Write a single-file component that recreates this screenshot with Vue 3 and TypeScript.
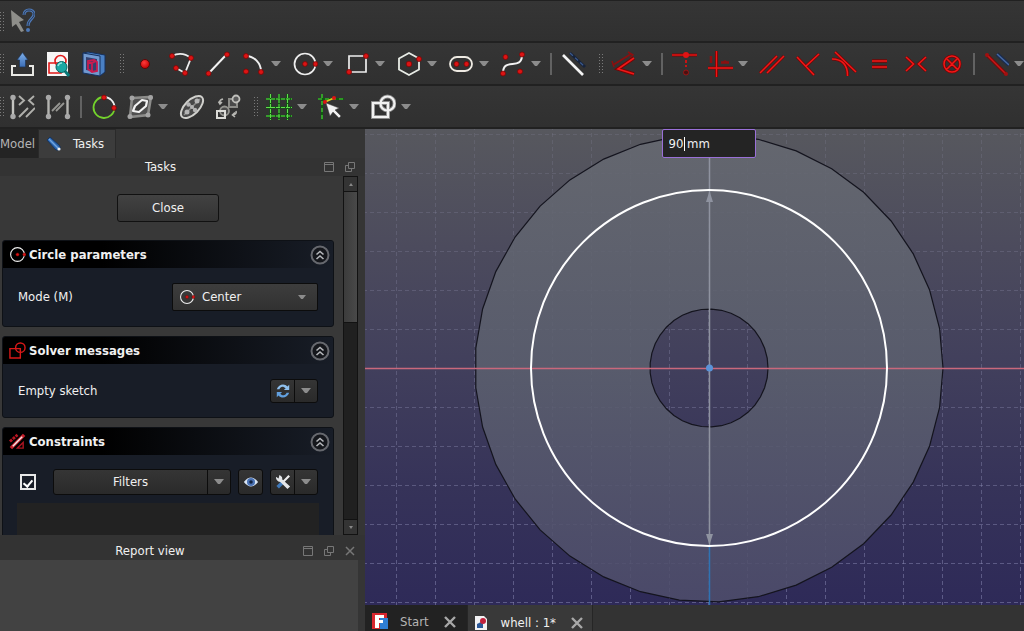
<script setup lang="ts">
import { ref } from 'vue'

type Kind = 'edge' | 'handle' | 'sep' | 'tool' | 'menu'
interface Item {
  kind: Kind
  icon?: string
  label?: string
}

const tool = (icon: string, label: string): Item => ({ kind: 'tool', icon, label })
const menu = (label: string): Item => ({ kind: 'menu', label })
const edge: Item = { kind: 'edge' }
const handle: Item = { kind: 'handle' }
const sep: Item = { kind: 'sep' }

const bars: { name: string; items: Item[] }[] = [
  { name: 'help', items: [edge, tool('whats', "What's this?")] },
  {
    name: 'sketch',
    items: [
      edge, tool('leave', 'Leave sketch'), tool('view', 'View sketch'), tool('section', 'View section'),
      handle, tool('point', 'Point'), tool('polyline', 'Polyline'), tool('line', 'Line'),
      tool('arc', 'Arc'), menu('Arc options'), tool('circle', 'Circle'), menu('Circle options'),
      tool('rect', 'Rectangle'), menu('Rectangle options'), tool('hexagon', 'Polygon'), menu('Polygon options'),
      tool('slot', 'Slot'), menu('Slot options'), tool('spline', 'B-spline'), menu('B-spline options'),
      sep, tool('construction', 'Toggle construction geometry'),
      handle, tool('dimension', 'Dimension'), menu('Dimension options'), sep,
      tool('coincident', 'Coincident'), tool('horver', 'Horizontal or vertical'), menu('Horizontal or vertical options'),
      tool('parallel', 'Parallel'), tool('perp', 'Perpendicular'), tool('tangent', 'Tangent'),
      tool('equal', 'Equal'), tool('symmetric', 'Symmetric'), tool('block', 'Block'),
      sep, tool('driving', 'Toggle driving constraint'), menu('Toggle constraint options'),
    ],
  },
  {
    name: 'visual',
    items: [
      edge, tool('selcon', 'Select constraints'), tool('selgeo', 'Select geometry'), sep,
      tool('dof', 'Convert arc'), tool('internal', 'Internal geometry'), menu('Internal geometry options'),
      tool('ellipse', 'Show ellipse'), tool('copy', 'Copy geometry'),
      handle, tool('grid', 'Grid'), menu('Grid options'), tool('snap', 'Snap'), menu('Snap options'),
      tool('order', 'Rendering order'), menu('Rendering order options'),
    ],
  },
]

const CX = 344
const CY = 239
const STEP = 39
const verticals = Array.from({ length: 41 }, (_, i) => CX + (i - 20) * STEP)
const horizontals = Array.from({ length: 31 }, (_, i) => CY + (i - 15) * STEP)

function facets(radius: number, count = 37): string {
  const points: string[] = []
  for (let i = 0; i < count; i++) {
    const a = (i * 2 * Math.PI) / count
    points.push(`${(CX + radius * Math.cos(a)).toFixed(1)} ${(CY - radius * Math.sin(a)).toFixed(1)}`)
  }
  return `M${points.join('L')}Z`
}
const rim = facets(234)
const bore = facets(59)

const mode = ref('Center')
const diameter = ref('90 mm')
const showConstraints = ref(true)
</script>

<template>
  <div class="app">
    <svg class="sprite" aria-hidden="true">
      <defs>
        <radialGradient id="redball" cx=".4" cy=".35" r=".7">
          <stop offset="0" stop-color="#ff3a3a" />
          <stop offset="1" stop-color="#c00000" />
        </radialGradient>
        <linearGradient id="bluearrow" x1="0" y1="0" x2="0" y2="1">
          <stop offset="0" stop-color="#7fb0ea" />
          <stop offset="1" stop-color="#3b6db5" />
        </linearGradient>
      </defs>
      <symbol id="i-whats" viewBox="0 0 26 26">
        <path d="M2 2L15 12L10 14L15 23L12 24L7 16L3 19Z" fill="#8e8e8a" />
        <path d="M15 7C15 0 25 1 25 6C25 11 19 11 19 18" fill="none" stroke="#4e79b8" stroke-width="3" />
        <path d="M15 7C15 0 25 1 25 6C25 11 19 11 19 18" fill="none" stroke="#27364c" stroke-width="1" />
        <circle cx="19" cy="22" r="2" fill="#4e79b8" />
      </symbol>
      <symbol id="i-leave" viewBox="0 0 26 26">
        <path d="M7 15H3V24H24V15H20" fill="none" stroke="#e8e8e4" stroke-width="2" />
        <path d="M13.500 1.500L19 9H16.500V16H10.500V9H8Z" fill="url(#bluearrow)" stroke="#1e3558" stroke-width=".7" />
      </symbol>
      <symbol id="i-view" viewBox="0 0 26 26">
        <path d="M2 1H23V25H2Z" fill="#f6f6f6" />
        <path d="M4 12H16V22H4Z" fill="none" stroke="#e01818" stroke-width="1.600" />
        <circle cx="15.500" cy="10" r="5.500" fill="none" stroke="#e01818" stroke-width="1.600" />
        <path d="M20 20L24 25" stroke="#087a7a" stroke-width="3" />
        <circle cx="16.500" cy="16" r="5.500" fill="#1ba8a4" stroke="#0a6462" />
        <path d="M13 15A4 4 0 0 1 17 12" fill="none" stroke="#93e4e0" stroke-width="1.500" />
      </symbol>
      <symbol id="i-section" viewBox="0 0 26 26">
        <path d="M2 2L7 1L24 4V21L19 25L2 22Z" fill="#4a80c4" stroke="#16305c" />
        <path d="M2 2L19 5V25L2 22Z" fill="#7199cf" stroke="#16305c" />
        <path d="M5 6L16 8V21L5 19Z" fill="#33406e" />
        <path d="M7 18V10L13 9L16 11V20L11 21ZM11 12V20M7 12L11 12L15 10" fill="none" stroke="#c81c50" stroke-width="1.800" />
      </symbol>
      <symbol id="i-point" viewBox="0 0 26 26"><circle cx="13" cy="13" r="4.500" fill="url(#redball)" stroke="#5a0808" /></symbol>
      <symbol id="i-polyline" viewBox="0 0 26 26">
        <path d="M4 5Q14 0 23 7L17 22L8 17" fill="none" stroke="#eee" stroke-width="1.800" />
        <g fill="#dc1414" stroke="#7a0606" stroke-width=".8"><circle cx="4" cy="5" r="2.500" /><circle cx="23" cy="7" r="2.500" /><circle cx="8" cy="17" r="2.500" /><circle cx="17" cy="22" r="2.500" /></g>
      </symbol>
      <symbol id="i-line" viewBox="0 0 26 26">
        <path d="M4 23L23 3" stroke="#f2f2f2" stroke-width="2" />
        <g fill="#dc1414" stroke="#7a0606" stroke-width=".8"><circle cx="4.500" cy="22.500" r="2.500" /><circle cx="23" cy="3.500" r="2.500" /></g>
      </symbol>
      <symbol id="i-arc" viewBox="0 0 26 26">
        <path d="M6 5A15.500 15.500 0 0 1 21 21" fill="none" stroke="#eee" stroke-width="2" />
        <g fill="#dc1414" stroke="#7a0606" stroke-width=".8"><circle cx="6" cy="5" r="2.500" /><circle cx="21" cy="21" r="2.500" /><circle cx="6" cy="20.500" r="2.500" /></g>
      </symbol>
      <symbol id="i-circle" viewBox="0 0 26 26">
        <circle cx="13" cy="13" r="10.500" fill="none" stroke="#eee" stroke-width="1.700" />
        <g fill="#dc1414" stroke="#7a0606" stroke-width=".8"><circle cx="13" cy="13" r="2.400" /><circle cx="23.500" cy="13" r="2.400" /></g>
      </symbol>
      <symbol id="i-rect" viewBox="0 0 26 26">
        <path d="M5 5H22V21H5Z" fill="none" stroke="#eee" stroke-width="1.700" />
        <g fill="#dc1414" stroke="#7a0606" stroke-width=".8"><circle cx="5" cy="21" r="2.500" /><circle cx="22" cy="5" r="2.500" /></g>
      </symbol>
      <symbol id="i-hexagon" viewBox="0 0 26 26">
        <path d="M13 2L23 7.500V18.500L13 24L3 18.500V7.500Z" fill="none" stroke="#e8ece6" stroke-width="1.800" />
        <g fill="#dc1414" stroke="#7a0606" stroke-width=".8"><circle cx="13" cy="13" r="2.800" /><circle cx="23" cy="8" r="2.500" /></g>
      </symbol>
      <symbol id="i-slot" viewBox="0 0 26 26">
        <rect x="2" y="6" width="22" height="14" rx="7" fill="none" stroke="#eeeae2" stroke-width="1.800" />
        <g fill="#dc1414" stroke="#7a0606" stroke-width=".8"><circle cx="8.500" cy="13" r="2.500" /><circle cx="18.500" cy="13" r="2.500" /></g>
      </symbol>
      <symbol id="i-spline" viewBox="0 0 26 26">
        <path d="M3 22C3 6 22 20 22 4" fill="none" stroke="#f2f2f2" stroke-width="2" />
        <g fill="#dc1414" stroke="#7a0606" stroke-width=".8"><circle cx="3" cy="22.500" r="2.500" /><circle cx="22" cy="3.500" r="2.500" /><circle cx="5.500" cy="6" r="2.500" /><circle cx="20" cy="20.500" r="2.500" /></g>
      </symbol>
      <symbol id="i-construction" viewBox="0 0 26 26">
        <path d="M3 4L23 24" stroke="#f4f4f4" stroke-width="2.600" />
        <path d="M10 2L25 16" stroke="#16233c" stroke-width="3" />
        <path d="M10 2L25 16" stroke="#3c5a8c" stroke-width="1.200" stroke-dasharray="4 3" />
      </symbol>
      <symbol id="i-dimension" viewBox="0 0 26 26">
        <path d="M2 14L20 3" stroke="#8a1010" stroke-width="2" />
        <path d="M1 10L3 16M17 1L22 4L19 7" fill="none" stroke="#8a1010" stroke-width="1.500" />
        <path d="M23 7L7 18L23 23" fill="none" stroke="#780404" stroke-width="3.600" />
        <path d="M23 7L7 18L23 23" fill="none" stroke="#f01818" stroke-width="1.600" />
      </symbol>
      <symbol id="i-coincident" viewBox="0 0 26 26">
        <path d="M1 4H26" stroke="#780404" stroke-width="3" /><path d="M1 4H26" stroke="#ee1616" stroke-width="1.300" />
        <circle cx="15" cy="4" r="3" fill="#e01414" />
        <path d="M15 9V12M15 14V16" stroke="#c81414" stroke-width="2" />
        <circle cx="15" cy="21.500" r="2.500" fill="#4a1010" stroke="#9a1414" />
      </symbol>
      <symbol id="i-horver" viewBox="0 0 26 26">
        <path d="M9.500 0V26M1 17H26" stroke="#780404" stroke-width="3" /><path d="M9.500 0V26M1 17H26" stroke="#ee1616" stroke-width="1.300" />
        <path d="M4 5V12M14 11.500H22" stroke="#8a1010" stroke-width="2.500" />
        <path d="M16 11Q18 8 20 11" fill="none" stroke="#8a1010" />
      </symbol>
      <symbol id="i-parallel" viewBox="0 0 26 26">
        <path d="M1 22L18 5M8 22L25 5" stroke="#780404" stroke-width="3" /><path d="M1 22L18 5M8 22L25 5" stroke="#f01818" stroke-width="1.500" />
      </symbol>
      <symbol id="i-perp" viewBox="0 0 26 26">
        <path d="M2 6L19 24M24 3L11 15" stroke="#780404" stroke-width="3" /><path d="M2 6L19 24M24 3L11 15" stroke="#f01818" stroke-width="1.500" />
      </symbol>
      <symbol id="i-tangent" viewBox="0 0 26 26">
        <path d="M4 1L25 21M1 8C11 8 17 14 16.500 25" fill="none" stroke="#780404" stroke-width="3" />
        <path d="M4 1L25 21M1 8C11 8 17 14 16.500 25" fill="none" stroke="#f01818" stroke-width="1.500" />
      </symbol>
      <symbol id="i-equal" viewBox="0 0 26 26">
        <path d="M5 10H20M5 16H20" stroke="#780404" stroke-width="3.400" /><path d="M5 10H20M5 16H20" stroke="#f01818" stroke-width="1.500" />
      </symbol>
      <symbol id="i-symmetric" viewBox="0 0 26 26">
        <path d="M3 6L10.500 13L3 20M23 6L15.500 13L23 20" fill="none" stroke="#780404" stroke-width="3" />
        <path d="M3 6L10.500 13L3 20M23 6L15.500 13L23 20" fill="none" stroke="#f01818" stroke-width="1.500" />
      </symbol>
      <symbol id="i-block" viewBox="0 0 26 26">
        <path d="M7.500 7.500L18.500 18.500M18.500 7.500L7.500 18.500M5 13A8 8 0 1 0 21 13A8 8 0 1 0 5 13" fill="none" stroke="#780404" stroke-width="3" />
        <path d="M7.500 7.500L18.500 18.500M18.500 7.500L7.500 18.500M5 13A8 8 0 1 0 21 13A8 8 0 1 0 5 13" fill="none" stroke="#f01818" stroke-width="1.500" />
      </symbol>
      <symbol id="i-driving" viewBox="0 0 26 26">
        <path d="M4 4L23 23" stroke="#7a0808" stroke-width="3.400" /><path d="M4 4L23 23" stroke="#c81818" stroke-width="1.500" />
        <circle cx="4" cy="4" r="2" fill="#a01010" /><circle cx="23" cy="23" r="2" fill="#a01010" />
        <path d="M14 3L26 14" stroke="#1b2c4c" stroke-width="4" /><path d="M14 3L26 14" stroke="#4668a4" stroke-width="1.500" />
      </symbol>
      <symbol id="i-selcon" viewBox="0 0 26 26">
        <path d="M4 3V23" stroke="#c4c4c0" stroke-width="2.400" />
        <circle cx="4" cy="3.500" r="2.700" fill="#aaa" /><circle cx="4" cy="22.500" r="2.700" fill="#aaa" />
        <path d="M10 2L15 6.500L10 11M25 2L20 6.500L25 11M10 23L19 14M17 23L26 14" fill="none" stroke="#b0b0ac" stroke-width="1.900" />
      </symbol>
      <symbol id="i-selgeo" viewBox="0 0 26 26">
        <path d="M3.500 3V23M22.500 3V23" stroke="#b4b4b0" stroke-width="2.400" />
        <g fill="#a8a8a8"><circle cx="3.500" cy="3.500" r="2.700" /><circle cx="3.500" cy="22.500" r="2.700" /><circle cx="22.500" cy="3.500" r="2.700" /><circle cx="22.500" cy="22.500" r="2.700" /></g>
        <path d="M7 17L15 9M11 17L19 9" stroke="#969692" stroke-width="1.800" />
      </symbol>
      <symbol id="i-dof" viewBox="0 0 26 26">
        <path d="M13 3A10.500 10.500 0 1 0 23.500 14" fill="none" stroke="#73d22c" stroke-width="1.800" />
        <path d="M13 3A10.500 10.500 0 0 1 23.500 14" fill="none" stroke="#eee" stroke-width="1.800" />
        <g fill="#e01414" stroke="#7a0606" stroke-width=".8"><circle cx="13" cy="3.500" r="2.400" /><circle cx="23" cy="14" r="2.400" /></g>
      </symbol>
      <symbol id="i-internal" viewBox="0 0 26 26">
        <path d="M5 4L24 3L21 21L3 23Z" fill="#505050" stroke="#8c8c8a" stroke-width="2.600" />
        <g fill="#a4a4a4"><circle cx="5" cy="4" r="2.500" /><circle cx="23.500" cy="3.500" r="2.500" /><circle cx="21" cy="21" r="2.500" /><circle cx="3" cy="22.500" r="2.500" /></g>
        <path d="M6 17L8 12L15 6L20 7L19 12L12 18Z" fill="#3a3a3a" stroke="#f2f2f2" stroke-width="2.200" stroke-linejoin="round" />
      </symbol>
      <symbol id="i-ellipse" viewBox="0 0 26 26">
        <ellipse cx="13" cy="13" rx="14" ry="7" transform="rotate(-45 13 13)" fill="#484848" stroke="#d0d0cc" stroke-width="2" />
        <path d="M5 21L21 5M9 9L17 17" stroke="#8c8c8a" stroke-width="1.500" />
        <g fill="#b4b4b4"><circle cx="9.500" cy="10.500" r="2.200" /><circle cx="16" cy="16" r="2.200" /><circle cx="18" cy="7" r="2.500" /><circle cx="8" cy="18" r="2.500" /><circle cx="13" cy="13" r="2" /></g>
      </symbol>
      <symbol id="i-copy" viewBox="0 0 26 26">
        <path d="M14 5H22V13H14Z" fill="#4a4a4a" stroke="#8c8c88" stroke-width="2" /><circle cx="21" cy="5" r="3.500" fill="#5a5a5a" stroke="#c0c0bc" stroke-width="1.800" />
        <circle cx="9.500" cy="17" r="4.500" fill="#4a4a4a" stroke="#94948f" stroke-width="1.800" /><path d="M2 17H10V24H2Z" fill="none" stroke="#dcdcd8" stroke-width="2" />
        <path d="M5 10V7Q5 6 8 5M3.500 7.500L5 10L7 8M21 17Q22 20 18 21M20 18.500L17.500 21L20 23" fill="none" stroke="#b8b8b4" stroke-width="1.600" />
      </symbol>
      <symbol id="i-grid" viewBox="0 0 26 26">
        <path d="M4.500 0V26M13 0V26M21.500 0V26M0 5H26M0 13.500H26M0 22H26" stroke="#0e5c0e" stroke-width="2.200" />
        <path d="M4.500 0V26M13 0V26M21.500 0V26M0 5H26M0 13.500H26M0 22H26" stroke="#5ee04a" stroke-width="1" stroke-dasharray="4 1" />
      </symbol>
      <symbol id="i-snap" viewBox="0 0 26 26">
        <path d="M4 0V26M0 5H26" stroke="#0e5c0e" stroke-width="2" /><path d="M4 0V26M0 5H26" stroke="#4ece3c" stroke-width="1.200" stroke-dasharray="4 3" />
        <path d="M7 8L16 4" stroke="#e0d020" stroke-width="1.500" />
        <circle cx="7" cy="8" r="2" fill="#dc1414" /><circle cx="16" cy="4" r="2" fill="#dc1414" />
        <path d="M8 9L21 14L17 16L23 22L21 24L15 18L12 22Z" fill="#f0f0f0" stroke="#444" stroke-width=".5" />
      </symbol>
      <symbol id="i-order" viewBox="0 0 26 26">
        <path d="M3 9H18V23H3Z" fill="none" stroke="#888" stroke-width="4" /><circle cx="17.500" cy="9.500" r="7" fill="none" stroke="#888" stroke-width="4" />
        <path d="M3 9H18V23H3Z" fill="none" stroke="#f2f2f2" stroke-width="2.200" /><circle cx="17.500" cy="9.500" r="7" fill="none" stroke="#f2f2f2" stroke-width="2.200" />
      </symbol>
      <symbol id="i-caret" viewBox="0 0 10 6"><path d="M0 0H10L6 5H4Z" fill="#8c8c8c" /></symbol>
      <symbol id="i-collapse" viewBox="0 0 20 20">
        <circle cx="10" cy="10" r="8.500" fill="#15171c" stroke="#66686e" stroke-width="2" />
        <path d="M6.500 9.500L10 6.500L13.500 9.500M6.500 14L10 11L13.500 14" fill="none" stroke="#b4b6ba" stroke-width="1.600" />
      </symbol>
      <symbol id="i-dock" viewBox="0 0 12 12"><path d="M1.500 1.500H10.500V10.500H1.500ZM2 3.500H10" fill="none" stroke="#777" /></symbol>
      <symbol id="i-float" viewBox="0 0 12 12"><path d="M4.500 1.500H10.500V7.500H4.500ZM4 4.500H1.500V10.500H7.500V8" fill="none" stroke="#777" /></symbol>
      <symbol id="i-x" viewBox="0 0 12 12"><path d="M1 1L11 11M11 1L1 11" stroke="currentColor" stroke-width="2.400" /></symbol>
    </svg>

    <header class="toolbars">
      <div v-for="bar in bars" :key="bar.name" class="bar" :class="'bar-' + bar.name" role="toolbar" :aria-label="bar.name">
        <template v-for="(item, i) in bar.items" :key="i">
          <span v-if="item.kind === 'edge' || item.kind === 'handle'" :class="item.kind"></span>
          <span v-else-if="item.kind === 'sep'" class="sep"></span>
          <button v-else-if="item.kind === 'tool'" class="tool" type="button" :aria-label="item.label">
            <svg class="glyph"><use :href="'#i-' + item.icon" /></svg>
          </button>
          <button v-else class="more" type="button" :aria-label="item.label">
            <svg class="caret"><use href="#i-caret" /></svg>
          </button>
        </template>
      </div>
    </header>

    <div class="body">
      <aside class="side">
        <nav class="tabs">
          <button class="tab" type="button">Model</button>
          <button class="tab current" type="button">
            <svg class="pencil" viewBox="0 0 18 18">
              <path d="M2 5L5 2L15 11L15 15L11 15Z" fill="#2c66ae" stroke="#17345e" />
              <path d="M4 4L13 13" stroke="#70a4e0" stroke-width="1.500" />
              <circle cx="14" cy="14" r="1.600" fill="#eee" />
            </svg>
            Tasks
          </button>
        </nav>
        <div class="dock-title">
          <h2>Tasks</h2>
          <button class="mini" type="button" aria-label="Dock tasks"><svg><use href="#i-dock" /></svg></button>
          <button class="mini" type="button" aria-label="Float tasks"><svg><use href="#i-float" /></svg></button>
        </div>

        <div class="scroller">
          <div class="tasks">
            <button class="close" type="button">Close</button>

            <section class="group">
              <header class="group-head">
                <svg class="head-icon"><use href="#i-circle" /></svg>
                <h3>Circle parameters</h3>
                <button class="fold" type="button" aria-label="Collapse circle parameters"><svg><use href="#i-collapse" /></svg></button>
              </header>
              <div class="group-row mode-row">
                <label for="mode">Mode (M)</label>
                <div class="combo">
                  <svg class="combo-icon"><use href="#i-circle" /></svg>
                  <select id="mode" v-model="mode"><option>Center</option></select>
                  <svg class="combo-caret"><use href="#i-caret" /></svg>
                </div>
              </div>
            </section>

            <section class="group">
              <header class="group-head">
                <svg class="head-icon" viewBox="0 0 18 18"><path d="M1 7H12V17H1Z" fill="none" stroke="#d81818" stroke-width="1.500" /><circle cx="12" cy="6" r="5" fill="none" stroke="#d81818" stroke-width="1.500" /></svg>
                <h3>Solver messages</h3>
                <button class="fold" type="button" aria-label="Collapse solver messages"><svg><use href="#i-collapse" /></svg></button>
              </header>
              <div class="group-row solver-row">
                <span>Empty sketch</span>
                <div class="split">
                  <button type="button" aria-label="Refresh">
                    <svg class="small-icon" viewBox="0 0 18 18">
                      <path d="M2 7C4 1 11 0 14 4L16 2V8H10L12 6C9 3 6 4 5 7Z" fill="#8fc0ee" />
                      <path d="M16 11C14 17 7 18 4 14L2 16V10H8L6 12C9 15 12 14 13 11Z" fill="#62a0de" />
                    </svg>
                  </button>
                  <button type="button" aria-label="Refresh options"><svg class="caret"><use href="#i-caret" /></svg></button>
                </div>
              </div>
            </section>

            <section class="group">
              <header class="group-head">
                <svg class="head-icon" viewBox="0 0 18 18">
                  <path d="M1 9L9 2" stroke="#b81420" stroke-width="3" stroke-dasharray="3 1" />
                  <path d="M2 16L16 2" stroke="#c8202c" stroke-width="3.600" /><path d="M4 14L14 4" stroke="#f4e4e4" stroke-width="1.600" />
                  <path d="M9 16L15 10V16Z" fill="none" stroke="#a81420" stroke-width="1.500" />
                </svg>
                <h3>Constraints</h3>
                <button class="fold" type="button" aria-label="Collapse constraints"><svg><use href="#i-collapse" /></svg></button>
              </header>
              <div class="group-row filter-row">
                <input v-model="showConstraints" class="check" type="checkbox" aria-label="Enable filters" />
                <div class="split filters">
                  <button class="filter-name" type="button">Filters</button>
                  <button type="button" aria-label="Filter options"><svg class="caret"><use href="#i-caret" /></svg></button>
                </div>
                <div class="split">
                  <button type="button" aria-label="Show constraints">
                    <svg class="small-icon" viewBox="0 0 18 18"><path d="M1 9Q9-1 17 9Q9 19 1 9Z" fill="#dbe6f4" /><circle cx="9" cy="9" r="4.500" fill="#4a72b4" /><circle cx="9" cy="9" r="2" fill="#122340" /></svg>
                  </button>
                </div>
                <div class="split">
                  <button type="button" aria-label="Settings">
                    <svg class="small-icon" viewBox="0 0 18 18">
                      <path d="M16 2L9 9" stroke="#eee" stroke-width="2.400" /><path d="M9 9L3 15" stroke="#3f78b8" stroke-width="4" />
                      <path d="M1 3L4 5L5 1Q9 3 8 6L17 14L14 17L6 9Q1 8 1 3Z" fill="#e4e6e8" />
                    </svg>
                  </button>
                  <button type="button" aria-label="Settings options"><svg class="caret"><use href="#i-caret" /></svg></button>
                </div>
              </div>
              <div class="list"></div>
            </section>
          </div>
          <div class="scrollbar" aria-hidden="true">
            <span class="step"><svg viewBox="0 0 4 3"><path d="M0 3L2 0L4 3Z" fill="#888" /></svg></span>
            <span class="track"><span class="thumb"></span></span>
            <span class="step"><svg viewBox="0 0 4 3"><path d="M0 0L2 3L4 0Z" fill="#888" /></svg></span>
          </div>
        </div>

        <div class="dock-title report">
          <h2>Report view</h2>
          <button class="mini" type="button" aria-label="Dock report view"><svg><use href="#i-dock" /></svg></button>
          <button class="mini" type="button" aria-label="Float report view"><svg><use href="#i-float" /></svg></button>
          <button class="mini" type="button" aria-label="Close report view"><svg viewBox="0 0 12 12"><path d="M2 2L10 10M10 2L2 10" stroke="currentColor" stroke-width="1.500" /></svg></button>
        </div>
        <div class="report-body"></div>
      </aside>

      <main class="work">
        <div class="viewport">
          <svg class="scene" viewBox="0 0 659 476" preserveAspectRatio="xMidYMid slice">
            <defs>
              <linearGradient id="face" x1="0" y1="0" x2="0" y2="1">
                <stop offset="0" stop-color="#666971" />
                <stop offset=".5" stop-color="#5b5f6e" />
                <stop offset="1" stop-color="#4e4d6b" />
              </linearGradient>
              <linearGradient id="mesh" gradientUnits="userSpaceOnUse" x1="0" y1="0" x2="0" y2="476">
                <stop offset="0" stop-color="#8c8ca4" stop-opacity=".2" />
                <stop offset="1" stop-color="#8c8cb8" stop-opacity=".5" />
              </linearGradient>
            </defs>
            <g class="mesh">
              <path v-for="x in verticals" :key="'v' + x" :d="`M${x - 0.5} -346V822`" stroke="url(#mesh)" />
              <path v-for="y in horizontals" :key="'h' + y" :d="`M-436 ${y + 0.5}H1124`" stroke="url(#mesh)" />
            </g>
            <path :d="rim + bore" fill="url(#face)" fill-rule="evenodd" fill-opacity=".88" stroke="#14141e" stroke-width="1.200" />
            <path d="M-436 239.500H1124" stroke="#c9687c" stroke-width="1.500" />
            <path d="M344.500 417V822" stroke="#2f73b4" stroke-width="1.500" />
            <path d="M344.500 28V417" stroke="#8f93a0" stroke-width="1.500" />
            <path d="M344.500 62L348 73H341ZM344.500 416L348 405H341Z" fill="#8f93a0" />
            <circle cx="344" cy="239" r="178" fill="none" stroke="#fff" stroke-width="2" />
            <circle cx="344.500" cy="239" r="3.500" fill="#5b93d8" />
          </svg>
          <div class="value">
            <input v-model="diameter" type="text" aria-label="Diameter" />
            <span class="cursor"></span>
          </div>
        </div>
        <nav class="docs">
          <div class="doc">
            <svg class="doc-icon" viewBox="0 0 18 18">
              <rect x="1" y="0" width="15" height="16" fill="#d8262e" />
              <rect x="9" y="5" width="8" height="11" fill="#2f7fd4" />
              <rect x="4" y="2" width="4" height="13" fill="#fff" />
              <rect x="8" y="2" width="5" height="3" fill="#fff" />
              <rect x="8" y="7" width="4" height="3" fill="#fff" />
            </svg>
            <button class="doc-name" type="button">Start</button>
            <button class="doc-close" type="button" aria-label="Close Start"><svg><use href="#i-x" /></svg></button>
          </div>
          <div class="doc open">
            <svg class="doc-icon page" viewBox="0 0 14 16">
              <path d="M1 1H10L13 4V15H1Z" fill="#f2f2f4" />
              <path d="M3 9L7 7L9 9V13H3Z" fill="#2c5898" /><circle cx="9" cy="6" r="3" fill="#c0203c" />
            </svg>
            <button class="doc-name" type="button">whell : 1*</button>
            <button class="doc-close" type="button" aria-label="Close whell"><svg><use href="#i-x" /></svg></button>
          </div>
        </nav>
      </main>
    </div>
  </div>
</template>

<style>
body {
  margin: 0;
  background: #323232;
}
</style>

<style scoped>
.app {
  display: flex;
  flex-direction: column;
  height: 100vh;
  overflow: hidden;
  background: #323232;
  color: #f0f0f0;
  font-family: "DejaVu Sans Condensed", "Noto Sans", sans-serif;
  font-size: 13px;
  line-height: 16px;
}
.app * {
  box-sizing: border-box;
}
.sprite {
  position: absolute;
  width: 0;
  height: 0;
}
button,
input,
select {
  margin: 0;
  padding: 0;
  border: 0;
  background: none;
  color: inherit;
  font: inherit;
}
h2,
h3 {
  margin: 0;
  font-size: 13px;
  line-height: 16px;
}
h2 {
  font-weight: 400;
}
svg {
  display: block;
  flex: none;
}

.toolbars {
  flex: none;
}
.bar {
  display: flex;
  align-items: stretch;
  height: 43px;
  overflow: hidden;
  border-bottom: 2px solid #212121;
  background: linear-gradient(#353535, #303030);
}
.bar-help {
  border-top: 1px solid #212121;
}
.edge,
.handle,
.sep,
.tool,
.more {
  flex: none;
}
.edge,
.handle {
  height: 19px;
  align-self: center;
  background: conic-gradient(from 270deg at 1px 1px, #7a7a7a 90deg, transparent 0) 0 0 / 3px 3px content-box content-box;
}
.edge {
  width: 4px;
}
.handle {
  width: 15px;
  padding: 0 1px 0 8px;
}
.sep {
  width: 8px;
  height: 22px;
  align-self: center;
  padding: 0 3px;
  background: #626262 content-box;
}
.bar-visual .sep {
  width: 10px;
  padding: 0 4px;
}
.tool {
  display: grid;
  place-items: center;
  width: 36px;
}
.glyph {
  width: 26px;
  height: 26px;
}
.more {
  display: flex;
  align-items: center;
  width: 16px;
}
.caret {
  width: 10px;
  height: 6px;
}

.body {
  display: grid;
  grid-template-columns: clamp(300px, 36vw, 365px) minmax(0, 1fr);
  flex: 1;
  min-height: 0;
}
.side {
  display: flex;
  flex-direction: column;
  min-height: 0;
  background: #353535;
}
.tabs {
  display: flex;
  flex: none;
  height: 29px;
}
.tab {
  width: 38px;
  background: #242424;
  color: #b4b4b4;
  text-align: left;
}
.tab.current {
  display: flex;
  align-items: center;
  gap: 10px;
  width: 78px;
  padding: 0 0 0 6px;
  border: 1px solid #2a2a2a;
  border-bottom: 0;
  background: #3c3c3c;
  color: #f0f0f0;
}
.pencil {
  width: 18px;
  height: 18px;
}
.dock-title {
  display: flex;
  flex: none;
  align-items: center;
  gap: 9px;
  height: 18px;
  padding-right: 9px;
  background: #333;
}
.dock-title h2 {
  flex: 1;
  padding-left: 7px;
  text-align: center;
}
.mini,
.mini svg {
  width: 12px;
  height: 12px;
  color: #777;
}
.report {
  height: 25px;
  padding: 7px 9px 0 0;
}
.report-body {
  flex: none;
  height: 71px;
  margin-right: 7px;
  background: #424242;
}

.scroller {
  display: flex;
  flex: 1;
  min-height: 0;
  padding-right: 7px;
}
.tasks {
  display: flex;
  flex: 1;
  flex-direction: column;
  gap: 9px;
  min-width: 0;
  overflow: hidden;
  padding: 18px 9px 0 2px;
  background: #383838;
}
.close {
  flex: none;
  align-self: center;
  width: 102px;
  height: 28px;
  margin-bottom: 9px;
  border: 1px solid #111;
  border-radius: 3px;
  background: linear-gradient(#424242, #333);
}
.group {
  flex: none;
  overflow: hidden;
  border: 1px solid #0e1116;
  border-radius: 3px;
  background: #181d27;
}
.group-head {
  display: flex;
  align-items: center;
  gap: 3px;
  height: 27px;
  padding: 0 3px 0 6px;
  background: linear-gradient(90deg, #000 30%, #181d27);
}
.group-head h3 {
  flex: 1;
  font-weight: 700;
}
.head-icon {
  width: 17px;
  height: 17px;
}
.fold,
.fold svg {
  width: 20px;
  height: 20px;
}
.group-row {
  display: flex;
  align-items: center;
  justify-content: space-between;
  padding: 0 15px;
}
.mode-row {
  height: 58px;
}
.solver-row {
  height: 53px;
}
.combo {
  display: flex;
  align-items: center;
  gap: 7px;
  width: 146px;
  height: 28px;
  padding: 0 11px 0 6px;
  border: 1px solid #0c0c0c;
  border-radius: 2px;
  background: linear-gradient(#3d3d3d, #313131);
}
.combo select {
  flex: 1;
  min-width: 0;
  appearance: none;
}
.combo-icon {
  width: 16px;
  height: 16px;
}
.combo-caret {
  width: 8px;
  height: 5px;
}
.split {
  display: flex;
  height: 24px;
  border: 1px solid #0c0c0c;
  border-radius: 3px;
  background: linear-gradient(#353535, #2a2a2a);
}
.split button {
  display: grid;
  place-items: center;
  width: 23px;
}
.split button + button {
  border-left: 1px solid #0c0c0c;
}
.small-icon {
  width: 16px;
  height: 16px;
}
.filter-row {
  gap: 7px;
  height: 54px;
}
.filter-row .split {
  height: 26px;
}
.split.filters {
  flex: 1;
  margin-left: 10px;
}
.split .filter-name {
  flex: 1;
}
.check {
  display: grid;
  flex: none;
  place-items: center;
  width: 16px;
  height: 16px;
  margin-left: 2px;
  border: 2px solid #e8e8e8;
  appearance: none;
}
.check:checked::before {
  width: 4px;
  height: 7px;
  border: solid #fff;
  border-width: 0 2px 2px 0;
  content: "";
  rotate: 40deg;
}
.list {
  height: 120px;
  margin: -6px 14px 0 14px;
  background: #222;
}
.scrollbar {
  display: flex;
  flex: none;
  flex-direction: column;
  width: 15px;
  border: 1px solid #121212;
  background: #202020;
}
.step {
  display: grid;
  flex: none;
  place-items: center;
  height: 14px;
  background: #343434;
}
.step svg {
  width: 4px;
  height: 3px;
}
.track {
  flex: 1;
  border: solid #121212;
  border-width: 1px 0;
}
.thumb {
  display: block;
  height: 40%;
  border-bottom: 1px solid #121212;
  background: linear-gradient(90deg, #3c3c3c, #494949);
}

.work {
  display: flex;
  flex-direction: column;
  min-width: 0;
  min-height: 0;
}
.viewport {
  position: relative;
  flex: 1;
  min-height: 0;
  background: linear-gradient(#57585e, #4c4b5d 25%, #413f5c 50%, #363359 75%, #2e2a58);
}
.scene {
  position: absolute;
  inset: 0;
  width: 100%;
  height: 100%;
}
.mesh path {
  fill: none;
  stroke-dasharray: 4 3;
}
.value {
  position: absolute;
  top: 0;
  left: 50%;
  width: 94px;
  margin-left: -33px;
}
.value input {
  display: block;
  width: 100%;
  height: 29px;
  padding: 0 6px;
  border: 1px solid #9a70d8;
  border-radius: 2px;
  outline: 0;
  background: #242424;
}
.cursor {
  position: absolute;
  top: 8px;
  left: 22px;
  width: 1px;
  height: 14px;
  background: #fff;
}
.docs {
  display: flex;
  flex: none;
  height: 26px;
  overflow: hidden;
  background: #333;
}
.doc {
  display: flex;
  align-items: center;
  height: 34px;
  padding: 0 11px 0 6px;
  border-right: 1px solid #262626;
  background: #222;
  color: #b4b4b4;
}
.doc.open {
  height: 36px;
  padding-right: 9px;
  background: #393939;
  color: #f0f0f0;
}
.doc-icon {
  width: 18px;
  height: 18px;
  margin-right: 11px;
}
.doc-icon.page {
  width: 14px;
  height: 16px;
  margin-right: 13px;
}
.doc-close {
  margin-left: 15px;
  color: #a8a8a8;
}
.doc-close svg {
  width: 12px;
  height: 12px;
}
</style>
